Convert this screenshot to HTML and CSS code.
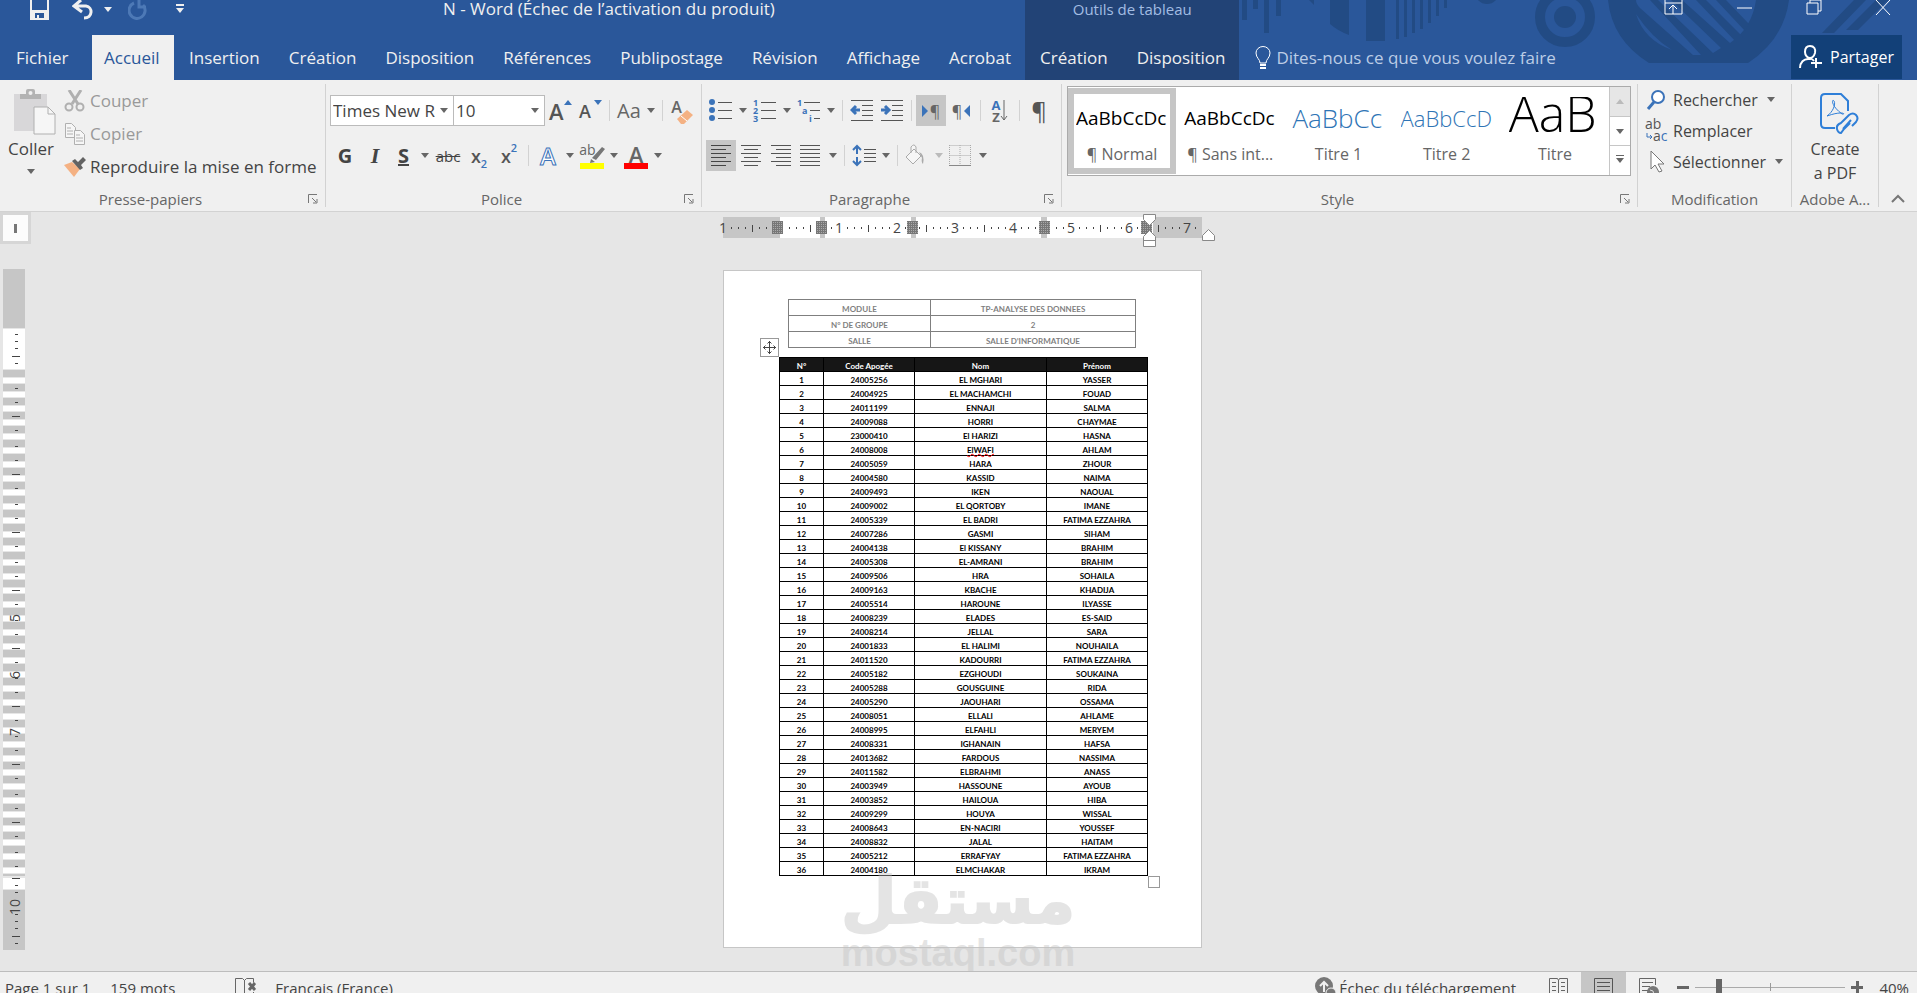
FILE: index.html
```
<!DOCTYPE html>
<html lang="fr">
<head>
    <meta charset="UTF-8">
    <meta name="viewport" content="width=device-width, initial-scale=1.0">
    <title>N - Word</title>
    <link rel="stylesheet" href="styles.css">
</head>
<body>

    <header class="app-header">
        <svg class="header-pattern" width="679" height="80" viewBox="0 0 679 80" aria-hidden="true">
            <g fill="#224b84">
                <path d="M4 0h5v20H4zM15 0h5v9h-5zM26 0h5v33h-5zM38 0h5v16h-5z"/>
                <path d="M92 0h19v35q-11-4-19-11zM128 0h19v41h-19zM158 0h3v39h-3zM166 0h3v37h-3zM174 0h3v33h-3zM182 0h3v29h-3zM190 0h3v23h-3zM198 0h3v16h-3zM206 0h3v8h-3z"/>
                <path d="M71 0h5v5z"/>
                <circle cx="249" cy="-8" r="12"/>
                <circle cx="327" cy="17" r="11"/>
                <path d="M370 0q4 40 41 63h99q36-24 41-63h-33q-4 28-26 43L444 0h-11l50 48-8 5L420 0h-8l51 55-8 0L402 8q-4-4-4-8z"/>
                <path d="M458 0h10l37 37-6 6zM478 0h10l23 24-4 7z"/>
                <path d="M584 33l32-33h12l-32 33zM608 30l30-30h12l-30 30z"/>
            </g>
            <path d="M398 14q8 26 36 36-20-12-36-36z" fill="#2a579a"/>
            <circle cx="327" cy="17" r="25" fill="none" stroke="#224b84" stroke-width="10"/>
        </svg>

        <div class="title-bar">
            <div class="quick-access">
                <button aria-label="Enregistrer">
                    <svg width="20" height="20" viewBox="0 0 20 20"><path d="M1 0v19h17V0" fill="none" stroke="#f0f0f0" stroke-width="2"/><path d="M2 10h15v9H2z" fill="#f0f0f0"/><path d="M5 13h9v5H9v-3H7v3H5z" fill="#2a579a"/></svg>
                </button>
                <button aria-label="Annuler">
                    <svg width="22" height="20" viewBox="0 0 22 20"><path d="M9 0L2 6l8 6M3 6h11c7 1 7 12-2 12" fill="none" stroke="#f0f0f0" stroke-width="3"/></svg>
                    <i class="caret"></i>
                </button>
                <button aria-label="Rétablir">
                    <svg width="20" height="20" viewBox="0 0 20 20"><path d="M6 3a8 8 0 1 0 9 2M11 0v7h7" fill="none" stroke="#4d79b6" stroke-width="3"/></svg>
                </button>
                <button class="customize" aria-label="Personnaliser">
                    <span class="bar"></span>
                    <i class="caret"></i>
                </button>
            </div>
            <div class="doc-title">N - Word (Échec de l’activation du produit)</div>
            <div class="window-buttons">
                <button aria-label="Options du ruban"><svg width="20" height="16" viewBox="0 0 20 16"><path d="M1 0v14h17V0M1 3h17M9 14V5M5 9l4-4 4 4" fill="none" stroke="#fff" stroke-width="1"/></svg></button>
                <button aria-label="Réduire"><svg width="16" height="16" viewBox="0 0 16 16"><path d="M0 8h15" stroke="#fff"/></svg></button>
                <button aria-label="Restaurer"><svg width="16" height="16" viewBox="0 0 16 16"><path d="M1 3h11v11H1zM4 3V0h11v11h-3" fill="none" stroke="#fff"/></svg></button>
                <button aria-label="Fermer"><svg width="16" height="16" viewBox="0 0 16 16"><path d="M1 0l14 15M15 0L1 15" stroke="#fff"/></svg></button>
            </div>
        </div>

        <nav class="tabs">
            <a class="file" href="#">Fichier</a>
            <a class="active" href="#">Accueil</a>
            <a href="#">Insertion</a>
            <a href="#">Création</a>
            <a href="#">Disposition</a>
            <a href="#">Références</a>
            <a href="#">Publipostage</a>
            <a href="#">Révision</a>
            <a href="#">Affichage</a>
            <a href="#">Acrobat</a>
            <div class="context-tabs">
                <span class="context-title">Outils de tableau</span>
                <a href="#">Création</a>
                <a href="#">Disposition</a>
            </div>
            <label class="tell-me">
                <svg width="16" height="24" viewBox="0 0 16 24"><path d="M5 17c0-4-4-5-4-10a7 6.500 0 0 1 14 0c0 5-4 6-4 10z" fill="none" stroke="#fff"/><path d="M5 19h6M5 22h6" stroke="#fff" stroke-width="2"/></svg>
                <input type="text" placeholder="Dites-nous ce que vous voulez faire">
            </label>
            <button class="share">
                <svg width="24" height="26" viewBox="0 0 24 26"><path d="M1 24c0-6 4-9 8-9s4-1 6 2M11 2c4 0 6 3 5 7-1 3-3 5-5 5s-5-2-5-6 2-6 5-6zM17 14v10M12 19h11" fill="none" stroke="#fff" stroke-width="2"/></svg>
                Partager
            </button>
        </nav>
    </header>

    <section class="ribbon">
        <div class="group clipboard">
            <div class="group-body">
                <button class="big">
                    <svg width="42" height="46" viewBox="0 0 42 46"><path d="M0 5h33v37H0z" fill="#d8d7d9"/><path d="M6 5h6V2q0-2 2-2h5q2 0 2 2v3h6v5H6z" fill="#b3b3b3"/><circle cx="16.500" cy="4" r="2" fill="#f0f0f0"/><path d="M20 18h14l7 7v20H20z" fill="#f6f6f6" stroke="#b0b0b0"/><path d="M34 18v7h7" fill="none" stroke="#b0b0b0"/></svg>
                    <span>Coller</span>
                    <i class="caret"></i>
                </button>
                <div class="stack">
                    <button class="line" disabled>
                        <svg width="22" height="22" viewBox="0 0 22 22"><path d="M5 0l9 14M17 0L8 14" stroke="#b0b0b0" stroke-width="3"/><circle cx="5" cy="17" r="3.500" fill="none" stroke="#b0b0b0" stroke-width="2"/><circle cx="16" cy="17" r="3.500" fill="none" stroke="#b0b0b0" stroke-width="2"/></svg>
                        Couper
                    </button>
                    <button class="line" disabled>
                        <svg width="22" height="22" viewBox="0 0 22 22"><g fill="#f6f6f6" stroke="#b0b0b0"><path d="M1.500 .5h6l4 4v10h-10z"/><path d="M3 5h4M3 8h6M3 11h6"/><path d="M10.500 7.500h6l4 4v10h-10z"/><path d="M12 12h4M12 15h7M12 18h7"/></g></svg>
                        Copier
                    </button>
                    <button class="line">
                        <svg width="22" height="20" viewBox="0 0 22 20"><path d="M0 8l8-3 8 7-6 8z" fill="#f4b183"/><path d="M8 4l3-2 3 3 5-5 3 3-5 5 2 3-3 2z" fill="#636363"/></svg>
                        Reproduire la mise en forme
                    </button>
                </div>
            </div>
            <div class="group-footer"><span>Presse-papiers</span><button class="launcher" aria-label="Presse-papiers"><svg width="10" height="10" viewBox="0 0 10 10"><path d="M.5 9V.5H9M4 4l4 4M9 5v4H5" fill="none" stroke="#777"/></svg></button></div>
        </div>

        <div class="group font">
            <div class="group-body rows">
                <div class="row">
                    <div class="combo name"><select aria-label="Police"><option>Times New Roman</option></select></div>
                    <div class="combo size"><select aria-label="Taille"><option>10</option></select></div>
                    <button class="tool grow">A<i class="up"></i></button>
                    <button class="tool shrink">A<i class="down"></i></button>
                    <i class="sep"></i>
                    <button class="tool split case">Aa<i class="caret"></i></button>
                    <i class="sep"></i>
                    <button class="tool clear" aria-label="Effacer la mise en forme"><span>A</span><svg width="16" height="14" viewBox="0 0 16 14"><path d="M0 9l10-9 6 5-9 9H4z" fill="#f4b183"/><path d="M4 6l6 5" stroke="#fff"/></svg></button>
                </div>
                <div class="row">
                    <button class="tool bold">G</button>
                    <button class="tool italic">I</button>
                    <button class="tool split under"><span>S</span><i class="caret"></i></button>
                    <button class="tool strike">abc</button>
                    <button class="tool script">x<sub>2</sub></button>
                    <button class="tool script">x<sup>2</sup></button>
                    <i class="sep"></i>
                    <button class="tool split effect"><span>A</span><i class="caret"></i></button>
                    <button class="tool split highlight" aria-label="Surlignage">
                        <span class="swatch"><em>ab</em><svg width="15" height="16" viewBox="0 0 15 16"><path d="M2 11L12 0l3 2L6 13zM0 16l1-4 4 3z" fill="#777"/></svg></span>
                        <i class="caret"></i>
                    </button>
                    <button class="tool split color"><span class="swatch">A</span><i class="caret"></i></button>
                </div>
            </div>
            <div class="group-footer"><span>Police</span><button class="launcher" aria-label="Police"><svg width="10" height="10" viewBox="0 0 10 10"><path d="M.5 9V.5H9M4 4l4 4M9 5v4H5" fill="none" stroke="#777"/></svg></button></div>
        </div>

        <div class="group paragraph">
            <div class="group-body rows">
                <div class="row">
                    <button class="tool split" aria-label="Puces"><svg width="24" height="24" viewBox="0 0 24 24"><g fill="#3b73b9"><circle cx="3" cy="3" r="3"/><circle cx="3" cy="11" r="3"/><circle cx="3" cy="19" r="3"/></g><path d="M9 3.500h14M9 11.500h14M9 19.500h14" stroke="#555"/></svg><i class="caret"></i></button>
                    <button class="tool split" aria-label="Numérotation"><svg class="digits" width="24" height="24" viewBox="0 0 24 24"><text x="0" y="7">1</text><text x="0" y="15">2</text><text x="0" y="23">3</text><path d="M8 3.500h15M8 11.500h15M8 19.500h15" stroke="#555"/></svg><i class="caret"></i></button>
                    <button class="tool split" aria-label="Liste à plusieurs niveaux"><svg class="digits" width="24" height="24" viewBox="0 0 24 24"><text x="0" y="7">1</text><text x="5" y="15">a</text><text x="12" y="23">i</text><path d="M7 3.500h16M13 11.500h10M17 19.500h6" stroke="#555"/></svg><i class="caret"></i></button>
                    <i class="sep"></i>
                    <button class="tool" aria-label="Diminuer le retrait"><svg width="24" height="24" viewBox="0 0 24 24"><path d="M1 1.500h22M12 6.500h11M12 11.500h11M12 16.500h11M1 21.500h22" stroke="#555"/><path d="M10 11H2M6 7l-4 4 4 4" fill="none" stroke="#3b73b9" stroke-width="3"/></svg></button>
                    <button class="tool" aria-label="Augmenter le retrait"><svg width="24" height="24" viewBox="0 0 24 24"><path d="M1 1.500h22M12 6.500h11M12 11.500h11M12 16.500h11M1 21.500h22" stroke="#555"/><path d="M1 11h8M5 7l4 4-4 4" fill="none" stroke="#3b73b9" stroke-width="3"/></svg></button>
                    <i class="sep"></i>
                    <button class="tool pressed pilcrow"><i class="tri-right"></i>¶</button>
                    <button class="tool pilcrow">¶<i class="tri-left"></i></button>
                    <i class="sep"></i>
                    <button class="tool sort"><span><b>A</b><b>Z</b></span><svg width="8" height="22" viewBox="0 0 8 22"><path d="M4 0v20M1 16l3 4 3-4" fill="none" stroke="#666"/></svg></button>
                    <i class="sep"></i>
                    <button class="tool marks">¶</button>
                </div>
                <div class="row">
                    <button class="tool pressed" aria-label="Aligner à gauche"><svg width="22" height="24" viewBox="0 0 22 24"><path d="M1 1.500h20M1 5.500h15M1 9.500h20M1 13.500h15M1 17.500h20M1 21.500h15" stroke="#444"/></svg></button>
                    <button class="tool" aria-label="Centrer"><svg width="22" height="24" viewBox="0 0 22 24"><path d="M1 1.500h20M4 5.500h14M1 9.500h20M4 13.500h14M1 17.500h20M4 21.500h14" stroke="#555"/></svg></button>
                    <button class="tool" aria-label="Aligner à droite"><svg width="22" height="24" viewBox="0 0 22 24"><path d="M1 1.500h20M6 5.500h15M1 9.500h20M6 13.500h15M1 17.500h20M6 21.500h15" stroke="#555"/></svg></button>
                    <button class="tool split" aria-label="Justifier"><svg width="22" height="24" viewBox="0 0 22 24"><path d="M1 1.500h20M1 5.500h20M1 9.500h20M1 13.500h20M1 17.500h20M1 21.500h20" stroke="#555"/></svg><i class="caret"></i></button>
                    <i class="sep"></i>
                    <button class="tool split" aria-label="Interligne"><svg width="24" height="24" viewBox="0 0 24 24"><path d="M5 2v8M1 6l4-4 4 4M5 13v8M1 17l4 4 4-4" fill="none" stroke="#3b73b9" stroke-width="2"/><path d="M12 5.500h12M12 9.500h12M12 13.500h12M12 17.500h12" stroke="#555"/></svg><i class="caret"></i></button>
                    <i class="sep"></i>
                    <button class="tool split" disabled aria-label="Trame de fond"><svg width="22" height="24" viewBox="0 0 22 24"><path d="M1 13l8-8 7 7-8 8zM6 9V3q3-4 5 0v6" fill="#f6f6f6" stroke="#aaa"/><path d="M14 8q6 2 4 12-2-2-1-6z" fill="#aaa"/></svg><i class="caret"></i></button>
                    <button class="tool split" aria-label="Bordures"><svg width="22" height="24" viewBox="0 0 22 24"><path d="M.5 1.500h21M.5 11.500h21M.5 1v20M11 1v20M21.500 1v20" stroke="#aaa" stroke-dasharray="1 1"/><path d="M0 21.500h22" stroke="#888"/></svg><i class="caret"></i></button>
                </div>
            </div>
            <div class="group-footer"><span>Paragraphe</span><button class="launcher" aria-label="Paragraphe"><svg width="10" height="10" viewBox="0 0 10 10"><path d="M.5 9V.5H9M4 4l4 4M9 5v4H5" fill="none" stroke="#777"/></svg></button></div>
        </div>

        <div class="group styles">
            <div class="group-body">
                <div class="gallery">
                    <button class="style selected"><span class="sample">AaBbCcDc</span><span>¶ Normal</span></button>
                    <button class="style"><span class="sample">AaBbCcDc</span><span>¶ Sans int...</span></button>
                    <button class="style"><span class="sample title1">AaBbCc</span><span>Titre 1</span></button>
                    <button class="style"><span class="sample title2">AaBbCcD</span><span>Titre 2</span></button>
                    <button class="style"><span class="sample title">AaB</span><span>Titre</span></button>
                    <div class="gallery-scroll">
                        <button disabled aria-label="Haut"><i class="up"></i></button>
                        <button aria-label="Bas"><i class="caret"></i></button>
                        <button aria-label="Autres"><i class="caret over"></i></button>
                    </div>
                </div>
            </div>
            <div class="group-footer"><span>Style</span><button class="launcher" aria-label="Style"><svg width="10" height="10" viewBox="0 0 10 10"><path d="M.5 9V.5H9M4 4l4 4M9 5v4H5" fill="none" stroke="#777"/></svg></button></div>
        </div>

        <div class="group editing">
            <div class="group-body stack">
                <button class="line">
                    <svg width="22" height="22" viewBox="0 0 22 22"><circle cx="12" cy="8" r="6" fill="#fff" stroke="#3b73b9" stroke-width="2"/><path d="M8 13l-6 7" stroke="#3b73b9" stroke-width="3"/></svg>
                    Rechercher <i class="caret"></i>
                </button>
                <button class="line">
                    <svg class="replace" width="22" height="22" viewBox="0 0 22 22"><text x="-1" y="9">ab</text><text x="7" y="21">a<tspan fill="#3b73b9">c</tspan></text><path d="M1 13v4h5M4 15l2 2-2 2" fill="none" stroke="#3b73b9"/></svg>
                    Remplacer
                </button>
                <button class="line">
                    <svg width="22" height="22" viewBox="0 0 22 22"><path d="M5 0v18l4-4 4 7 3-1-4-7h6z" fill="#fff" stroke="#777"/></svg>
                    Sélectionner<i class="caret"></i>
                </button>
            </div>
            <div class="group-footer"><span>Modification</span></div>
        </div>

        <div class="group adobe">
            <div class="group-body">
                <button class="big">
                    <svg width="40" height="43" viewBox="0 0 40 43"><g fill="none" stroke="#2f7fd8" stroke-width="2"><path d="M16 36H6q-4 0-4-4V6q0-4 4-4h16l7 7v10"/><path d="M8 24c6-4 9-12 7-15s-4 4 8 13c4 1 2-4-15 2z" stroke-width="1"/><path d="M24 29l6-6q4-3 7 0t0 7l-4 4M31 31l-6 6-3 4q-3 0-4-4t4-6l3-3M24 37l8-9"/></g></svg>
                    <span>Create<br>a PDF</span>
                </button>
            </div>
            <div class="group-footer"><span>Adobe A...</span></div>
        </div>

        <button class="collapse" aria-label="Réduire le ruban"><svg width="14" height="10" viewBox="0 0 14 10"><path d="M1 8l6-6 6 6" fill="none" stroke="#777" stroke-width="2"/></svg></button>
    </section>

    <main class="workspace">
        <div class="side">
            <div class="tab-stop"><i></i></div>
            <svg class="v-ruler" width="22" height="684" viewBox="0 0 22 684">
                <defs>
                    <pattern id="rows" width="22" height="14" patternUnits="userSpaceOnUse" y="101">
                        <rect width="22" height="7" fill="#c6c6c6"/>
                        <rect y="8" width="22" height="5" fill="#fff"/>
                    </pattern>
                    <pattern id="ticks" width="22" height="58" patternUnits="userSpaceOnUse" y="110">
                        <path d="M12 9.500h3M12 23.500h3M9 37.500h8M12 51.500h3" stroke="#444"/>
                    </pattern>
                </defs>
                <rect width="22" height="59" fill="#c6c6c6"/>
                <rect y="60" width="22" height="40" fill="#fff"/>
                <path d="M12 65.500h3M12 72.500h3M12 79.500h3M9 87.500h8M12 94.500h3" stroke="#444"/>
                <rect y="101" width="22" height="506" fill="url(#rows)"/>
                <rect y="110" width="22" height="497" fill="url(#ticks)"/>
                <rect y="609" width="22" height="11" fill="#fff"/>
                <rect y="621" width="22" height="60" fill="#c6c6c6"/>
                <path d="M9 609.500h8M12 616.500h3M12 623.500h3M12 645.500h3M12 652.500h3M12 659.500h3M9 667.500h8M12 674.500h3" stroke="#444"/>
                <g class="ruler-text">
                    <text transform="translate(17 349) rotate(-90)">5</text>
                    <text transform="translate(17 406) rotate(-90)">6</text>
                    <text transform="translate(17 463) rotate(-90)">7</text>
                    <text transform="translate(17 638) rotate(-90)">10</text>
                </g>
            </svg>
        </div>

        <div class="canvas">
            <svg class="h-ruler" width="479" height="36" viewBox="0 0 479 36">
                <defs>
                    <pattern id="inch" x="58" width="58" height="36" patternUnits="userSpaceOnUse">
                        <path d="M8.500 13v2M15.500 13v2M22.500 13v2M29.500 11v7M36.500 13v2M43.500 13v2M50.500 13v2" stroke="#444"/>
                    </pattern>
                    <pattern id="grid" width="2" height="2" patternUnits="userSpaceOnUse">
                        <rect width="2" height="2" fill="#777"/>
                        <rect width="1" height="1" fill="#aaa"/>
                    </pattern>
                </defs>
                <path d="M0 3h479v21H0z" fill="#fff"/>
                <path d="M0 3h57v21H0zM97 3h5v21h-5zM188 3h5v21h-5zM318 3h6v21h-6zM430 3h49v21h-49z" fill="#c6c6c6"/>
                <rect width="479" height="36" fill="url(#inch)"/>
                <path d="M49 7h11v13H49zM93 7h11v13H93zM184 7h11v13h-11zM316 7h11v13h-11zM418 7h11v13h-11z" fill="url(#grid)"/>
                <g class="ruler-text">
                    <text x="0" y="19">1</text><text x="116" y="19">1</text><text x="174" y="19">2</text><text x="232" y="19">3</text>
                    <text x="290" y="19">4</text><text x="348" y="19">5</text><text x="406" y="19">6</text><text x="464" y="19">7</text>
                </g>
                <g fill="#fff" stroke="#888">
                    <path d="M420.500 .5h12v5l-6 6-6-6z"/>
                    <path d="M426.500 16.500l6 6v10h-12v-10zM420.500 26.500h12"/>
                    <path d="M485.500 15.500l6 6v5h-12v-5z"/>
                </g>
            </svg>

            <article class="page">
                <table class="info">
                    <tr><td>MODULE</td><td>TP-ANALYSE DES DONNEES</td></tr>
                    <tr><td>N° DE GROUPE</td><td>2</td></tr>
                    <tr><td>SALLE</td><td>SALLE D’INFORMATIQUE</td></tr>
                </table>

                <div class="list-wrap">
                    <div class="move-handle"><svg width="13" height="13" viewBox="0 0 13 13"><path d="M6.500 0v13M0 6.500h13M4.500 2.500l2-2 2 2M4.500 10.500l2 2 2-2M2.500 4.500l-2 2 2 2M10.500 4.500l2 2-2 2" fill="none" stroke="#444"/></svg></div>
                    <table class="list">
                        <thead>
                            <tr><th>N°</th><th>Code Apogée</th><th>Nom</th><th>Prénom</th></tr>
                        </thead>
                        <tbody>
                            <tr><td>1</td><td>24005256</td><td>EL MGHARI</td><td>YASSER</td></tr>
                            <tr><td>2</td><td>24004925</td><td>EL MACHAMCHI</td><td>FOUAD</td></tr>
                            <tr><td>3</td><td>24011199</td><td>ENNAJI</td><td>SALMA</td></tr>
                            <tr><td>4</td><td>24009088</td><td>HORRI</td><td>CHAYMAE</td></tr>
                            <tr><td>5</td><td>23000410</td><td>El HARIZI</td><td>HASNA</td></tr>
                            <tr><td>6</td><td>24008008</td><td><span class="typo">ElWAFI</span></td><td>AHLAM</td></tr>
                            <tr><td>7</td><td>24005059</td><td>HARA</td><td>ZHOUR</td></tr>
                            <tr><td>8</td><td>24004580</td><td>KASSID</td><td>NAIMA</td></tr>
                            <tr><td>9</td><td>24009493</td><td>IKEN</td><td>NAOUAL</td></tr>
                            <tr><td>10</td><td>24009002</td><td>EL QORTOBY</td><td>IMANE</td></tr>
                            <tr><td>11</td><td>24005339</td><td>EL BADRI</td><td>FATIMA EZZAHRA</td></tr>
                            <tr><td>12</td><td>24007286</td><td>GASMI</td><td>SIHAM</td></tr>
                            <tr><td>13</td><td>24004138</td><td>El KISSANY</td><td>BRAHIM</td></tr>
                            <tr><td>14</td><td>24005308</td><td>EL-AMRANI</td><td>BRAHIM</td></tr>
                            <tr><td>15</td><td>24009506</td><td>HRA</td><td>SOHAILA</td></tr>
                            <tr><td>16</td><td>24009163</td><td>KBACHE</td><td>KHADIJA</td></tr>
                            <tr><td>17</td><td>24005514</td><td>HAROUNE</td><td>ILYASSE</td></tr>
                            <tr><td>18</td><td>24008239</td><td>ELADES</td><td>ES-SAID</td></tr>
                            <tr><td>19</td><td>24008214</td><td>JELLAL</td><td>SARA</td></tr>
                            <tr><td>20</td><td>24001833</td><td>EL HALIMI</td><td>NOUHAILA</td></tr>
                            <tr><td>21</td><td>24011520</td><td>KADOURRI</td><td>FATIMA EZZAHRA</td></tr>
                            <tr><td>22</td><td>24005182</td><td>EZGHOUDI</td><td>SOUKAINA</td></tr>
                            <tr><td>23</td><td>24005288</td><td>GOUSGUINE</td><td>RIDA</td></tr>
                            <tr><td>24</td><td>24005290</td><td>JAOUHARI</td><td>OSSAMA</td></tr>
                            <tr><td>25</td><td>24008051</td><td>ELLALI</td><td>AHLAME</td></tr>
                            <tr><td>26</td><td>24008995</td><td>ELFAHLI</td><td>MERYEM</td></tr>
                            <tr><td>27</td><td>24008331</td><td>IGHANAIN</td><td>HAFSA</td></tr>
                            <tr><td>28</td><td>24013682</td><td>FARDOUS</td><td>NASSIMA</td></tr>
                            <tr><td>29</td><td>24011582</td><td>ELBRAHMI</td><td>ANASS</td></tr>
                            <tr><td>30</td><td>24003949</td><td>HASSOUNE</td><td>AYOUB</td></tr>
                            <tr><td>31</td><td>24003852</td><td>HAILOUA</td><td>HIBA</td></tr>
                            <tr><td>32</td><td>24009299</td><td>HOUYA</td><td>WISSAL</td></tr>
                            <tr><td>33</td><td>24008643</td><td>EN-NACIRI</td><td>YOUSSEF</td></tr>
                            <tr><td>34</td><td>24008832</td><td>JALAL</td><td>HAITAM</td></tr>
                            <tr><td>35</td><td>24005212</td><td>ERRAFYAY</td><td>FATIMA EZZAHRA</td></tr>
                            <tr><td>36</td><td>24004180</td><td>ELMCHAKAR</td><td>IKRAM</td></tr>
                        </tbody>
                    </table>
                    <div class="resize-handle"></div>
                </div>
            </article>

            <div class="watermark">
                <span class="arabic" lang="ar" dir="rtl">مستقل</span>
                <span class="latin">mostaql.com</span>
            </div>
        </div>
    </main>

    <footer class="status-bar">
        <span class="pages">Page 1 sur 1</span>
        <span class="words">159 mots</span>
        <svg class="proof" width="22" height="22" viewBox="0 0 22 22"><path d="M.5 16V.5h7l2 2 2-2h7v4M9.500 2v16M18.500 14v4" fill="none" stroke="#666"/><path d="M14 5l6 7M20 5l-6 7" stroke="#666" stroke-width="3"/></svg>
        <span>Français (France)</span>
        <div class="status-right">
            <span class="upload"><svg width="22" height="22" viewBox="0 0 22 22"><circle cx="9" cy="9" r="9" fill="#777"/><path d="M9 15V5M5 9l4-4 4 4" fill="none" stroke="#f0f0f0" stroke-width="2"/><circle cx="16" cy="16" r="5" fill="#777" stroke="#f0f0f0"/></svg>Échec du téléchargement</span>
            <button class="view" aria-label="Mode Lecture"><svg width="20" height="22" viewBox="0 0 20 22"><path d="M.5 20V1.500h8l1 2 1-2h8V20M9.500 3v17M3 5.500h4M3 9.500h4M3 13.500h4M12 5.500h4M12 9.500h4M12 13.500h4" fill="none" stroke="#666"/></svg></button>
            <button class="view on" aria-label="Page"><svg width="20" height="22" viewBox="0 0 20 22"><path d="M.5 22V1.500h18V22M3 5.500h13M3 9.500h13M3 13.500h13M3 17.500h13" fill="none" stroke="#555"/></svg></button>
            <button class="view" aria-label="Mode Web"><svg width="20" height="22" viewBox="0 0 20 22"><path d="M.5 22V1.500h16V8M3 5.500h11M3 9.500h8M3 13.500h6" fill="none" stroke="#666"/><circle cx="14" cy="15" r="6" fill="#777"/><path d="M11 13l3 1 1 4" stroke="#ddd" fill="none"/></svg></button>
            <button class="zoom-btn" aria-label="Zoom arrière"><i class="minus"></i></button>
            <input class="zoom" type="range" min="10" max="500" value="80" aria-label="Zoom">
            <button class="zoom-btn" aria-label="Zoom avant"><i class="minus plus"></i></button>
            <span class="percent">40%</span>
        </div>
    </footer>

</body>
</html>
```
FILE: styles.css
```
* {
    box-sizing: border-box;
}

body {
    margin: 0;
    height: 100vh;
    overflow: hidden;
    display: flex;
    flex-direction: column;
    background: #e6e6e6;
    color: #444;
    font-family: "Open Sans", "Noto Sans", sans-serif;
    font-size: 16px;
}

button {
    display: flex;
    align-items: center;
    justify-content: center;
    padding: 0;
    border: 0;
    background: none;
    color: inherit;
    font: inherit;
}

svg {
    display: block;
    flex: none;
}

a {
    color: inherit;
    text-decoration: none;
}

.caret, .down {
    flex: none;
    width: 0;
    height: 0;
    border: 4px solid transparent;
    border-top: 5px solid #666;
    border-bottom: 0;
}

.up {
    flex: none;
    width: 0;
    height: 0;
    border: 4px solid transparent;
    border-bottom: 5px solid #bbb;
    border-top: 0;
}

/* ---------- header ---------- */

.app-header {
    position: relative;
    flex: none;
    background: #2a579a;
    color: #f0f0f0;
    font-size: 17px;
}

.header-pattern {
    position: absolute;
    top: 0;
    right: 0;
}

.title-bar {
    position: relative;
    display: flex;
    justify-content: space-between;
    height: 35px;
}

.quick-access {
    display: flex;
    align-items: flex-start;
    gap: 16px;
    width: 443px;
    padding-left: 30px;
}

.quick-access button {
    height: 19px;
    gap: 10px;
}

.quick-access button:nth-child(2) {
    margin-left: 6px;
}

.quick-access .caret {
    border-top-color: #f0f0f0;
}

.quick-access .customize {
    flex-direction: column;
    gap: 2px;
    height: 16px;
    margin-left: 12px;
}

.bar {
    width: 8px;
    height: 2px;
    background: #f0f0f0;
}

.doc-title {
    flex: 1;
    line-height: 18px;
}

.window-buttons {
    display: flex;
    align-items: flex-start;
    gap: 53px;
    padding-right: 26px;
}

.tabs {
    position: relative;
    display: flex;
    height: 45px;
    line-height: 46px;
}

.tabs a {
    padding: 0 14px 0 15px;
}

.tabs .file {
    width: 92px;
    padding-left: 16px;
}

.tabs .active {
    width: 82px;
    padding: 0 12px;
    background: #f0f0f0;
    color: #2a579a;
}

.context-tabs {
    position: relative;
    display: flex;
    background: #224376;
}

.context-title {
    position: absolute;
    left: 0;
    right: 0;
    bottom: 45px;
    height: 35px;
    background: #224376;
    color: #a3bde3;
    font-size: 15px;
    line-height: 18px;
    text-align: center;
}

.tell-me {
    display: flex;
    align-items: center;
    flex: 1;
    gap: 5px;
    padding-left: 16px;
}

.tell-me input {
    flex: 1;
    border: 0;
    padding: 0;
    background: none;
    font: inherit;
    color: #fff;
}

.tell-me input::placeholder {
    color: #bccde6;
    opacity: 1;
}

.share {
    gap: 7px;
    width: 111px;
    height: 44px;
    margin-right: 15px;
    background: #124078;
    color: #fff;
    font-size: 16px;
}

/* ---------- ribbon ---------- */

.ribbon {
    display: flex;
    flex: none;
    height: 132px;
    padding-top: 4px;
    background: #f0f0f0;
    border-bottom: 1px solid #d2d2d2;
}

.group {
    display: flex;
    flex-direction: column;
    flex: none;
    height: 123px;
    border-right: 1px solid #d2d2d2;
}

.group-body {
    display: flex;
    flex: 1;
}

.group-footer {
    display: flex;
    align-items: center;
    height: 16px;
    color: #666;
    font-size: 15px;
    line-height: 16px;
}

.group-footer span {
    flex: 1;
    text-align: center;
    white-space: nowrap;
}

.launcher {
    width: 24px;
}

.clipboard {
    width: 326px;
    font-size: 17px;
}

.font { width: 376px; }
.paragraph { width: 360px; }
.styles { flex: 1; }
.editing { width: 154px; }
.adobe { width: 87px; }

.big {
    flex-direction: column;
    justify-content: flex-start;
    width: 62px;
    padding-top: 5px;
    line-height: 24px;
}

.big svg {
    margin: 0 0 2px 8px;
}

.big .caret {
    margin-top: 8px;
}

.adobe .big {
    width: 100%;
    padding-top: 8px;
}

.stack {
    display: flex;
    flex-direction: column;
}

.clipboard .stack {
    padding-left: 2px;
}

.line {
    justify-content: flex-start;
    gap: 4px;
    height: 33px;
    white-space: nowrap;
}

.line:disabled {
    color: #999;
}

.editing .line {
    gap: 5px;
    height: 31px;
}

.editing .group-body {
    padding-left: 8px;
}

.editing .line .caret {
    margin-left: 4px;
}

.replace {
    overflow: visible;
}

.replace text {
    font-size: 14px;
    fill: #555;
}

.rows {
    flex-direction: column;
    gap: 14px;
    padding: 11px 0 0 4px;
}

.row {
    display: flex;
    height: 31px;
}

.combo {
    position: relative;
    border: 1px solid #bbb;
    background: #fff;
}

.combo::after {
    content: '';
    position: absolute;
    top: 12px;
    right: 5px;
    border: 4px solid transparent;
    border-top: 5px solid #666;
    border-bottom: 0;
}

.combo.name {
    width: 124px;
}

.combo.size {
    width: 91px;
    border-left: 0;
}

.combo select {
    width: 100%;
    height: 29px;
    border: 0;
    padding: 0 18px 0 2px;
    appearance: none;
    background: none;
    color: #444;
    font: inherit;
    font-size: 17px;
}

.tool {
    position: relative;
    flex: none;
    width: 30px;
    color: #444;
}

.tool.split {
    width: 44px;
    justify-content: space-between;
    padding: 0 3px;
}

.tool:disabled .caret {
    border-top-color: #bbb;
}

.pressed {
    background: #c6c6c6;
}

.sep {
    width: 1px;
    height: 21px;
    margin: 5px 4px;
    background: #d2d2d2;
}

.tool.grow, .tool.shrink {
    justify-content: flex-start;
    padding-left: 4px;
    color: #555;
    font-size: 22px;
    font-weight: 600;
}

.tool.shrink {
    font-size: 18px;
}

.grow .up, .shrink .down {
    position: absolute;
    top: 5px;
    right: 3px;
    border-bottom-color: #3b73b9;
}

.shrink .down {
    border-top-color: #3b73b9;
    border-bottom-color: transparent;
}

.case {
    color: #666;
    font-size: 20px;
}

.clear span {
    margin: 0 -5px 8px 0;
    color: #666;
    font-weight: 600;
}

.clear svg {
    margin-top: 12px;
}

.bold {
    font-size: 20px;
    font-weight: 700;
}

.italic {
    font: italic bold 22px "Liberation Serif", serif;
}

.tool.under {
    width: 42px;
}

.under span {
    padding-left: 5px;
    font-size: 20px;
    font-weight: 700;
    text-decoration: underline;
}

.tool.strike {
    width: 32px;
    text-decoration: line-through;
    font-size: 15px;
}

.script {
    color: #555;
    font-size: 18px;
    font-weight: 600;
}

.script sub, .script sup {
    align-self: flex-end;
    color: #3b73b9;
    font-size: 11px;
}

.script sup {
    align-self: flex-start;
}

.effect span {
    padding-left: 4px;
    color: #fff;
    font-size: 24px;
    font-weight: 600;
    -webkit-text-stroke: 1px #3b73b9;
}

.swatch {
    display: flex;
    justify-content: center;
    width: 24px;
    height: 26px;
    border-bottom: 6px solid red;
    color: #666;
    font-size: 22px;
    font-weight: 600;
    line-height: 22px;
}

.highlight .swatch {
    border-bottom-color: #ff0;
    font-size: 14px;
    font-weight: 400;
    line-height: 14px;
}

.highlight em {
    margin-right: -6px;
    font-style: normal;
}

.highlight svg {
    margin-top: 4px;
}

.digits {
    overflow: visible;
}

.digits text {
    fill: #3b73b9;
    font-size: 9px;
    font-weight: 700;
}

.pilcrow {
    color: #666;
    gap: 2px;
}

.tri-right, .tri-left {
    border: 6px solid transparent;
    border-left-color: #3b73b9;
    border-right: 0;
}

.tri-left {
    border-right: 6px solid #3b73b9;
    border-left: 0;
}

.sort span {
    display: flex;
    flex-direction: column;
    color: #3b73b9;
    font-size: 13px;
    line-height: 12px;
}

.sort b + b {
    color: #666;
}

.marks {
    font-size: 24px;
    color: #555;
}

.gallery {
    display: flex;
    flex: 1;
    height: 90px;
    margin: 2px 6px 0 5px;
    border: 1px solid #ababab;
    background: #fff;
}

.style {
    flex: 1;
    flex-direction: column;
    justify-content: flex-start;
    min-width: 0;
    height: 86px;
    margin-top: 1px;
    border: 6px solid transparent;
    padding: 3px 2px 0;
    color: #666;
    white-space: nowrap;
}

.style.selected {
    border-color: #c6c6c6;
}

.sample {
    width: 100%;
    height: 46px;
    overflow: hidden;
    color: #000;
    font-size: 19px;
    line-height: 42px;
    text-align: left;
}

.title1, .title2 {
    color: #2e74b5;
    font-size: 26px;
    font-weight: 300;
}

.title2 {
    font-size: 22px;
}

.title {
    font-size: 50px;
    font-weight: 300;
    line-height: 32px;
}

.gallery-scroll {
    display: flex;
    flex-direction: column;
    width: 21px;
    border-left: 1px solid #c6c6c6;
}

.gallery-scroll button {
    flex: 1;
    border-bottom: 1px solid #c6c6c6;
}

.gallery-scroll button:last-child {
    border-bottom: 0;
}

.gallery-scroll button:disabled {
    background: #e6e6e6;
}

.over {
    position: relative;
}

.over::before {
    content: '';
    position: absolute;
    top: -8px;
    left: -4px;
    width: 8px;
    height: 1px;
    background: #666;
}

.collapse {
    align-self: flex-end;
    width: 38px;
    height: 24px;
}

/* ---------- workspace ---------- */

.workspace {
    display: flex;
    flex: 1;
    min-height: 0;
    overflow: hidden;
}

.side {
    width: 31px;
}

.tab-stop {
    display: flex;
    align-items: center;
    justify-content: center;
    width: 31px;
    height: 32px;
    border: 3px solid #d6d6d6;
    background: #fcfcfc;
}

.tab-stop i {
    width: 3px;
    height: 9px;
    background: #777;
}

.v-ruler {
    margin: 25px 0 0 3px;
}

.ruler-text text {
    fill: #444;
    font-size: 14px;
    text-anchor: middle;
}

.canvas {
    position: relative;
    display: flex;
    flex-direction: column;
    align-items: center;
    flex: 1;
    padding: 2px 24px 0 0;
}

.h-ruler {
    overflow: visible;
}

.page {
    flex: none;
    width: 479px;
    height: 678px;
    margin-top: 20px;
    padding: 28px 0 0 55px;
    border: 1px solid #c6c6c6;
    background: #fff;
    font-family: Lato, "Open Sans", sans-serif;
    font-size: 8px;
    font-weight: 700;
    line-height: 8px;
}

table {
    border-collapse: collapse;
    table-layout: fixed;
}

td, th {
    border: 1px solid #000;
    padding: 2px 0 0 1px;
    text-align: center;
    white-space: nowrap;
}

.info {
    width: 348px;
    margin-left: 9px;
    color: #7f7f7f;
}

.info td {
    height: 16px;
    border-color: #7f7f7f;
}

.info td:first-child {
    width: 142px;
}

.list-wrap {
    position: relative;
    width: 369px;
    margin-top: 9px;
    color: #000;
}

.list {
    width: 369px;
}

.list td, .list th {
    height: 14px;
}

.list th {
    background: #161616;
    color: #fff;
}

.list th:nth-child(1) { width: 44px; }
.list th:nth-child(2) { width: 91px; }
.list th:nth-child(3) { width: 132px; }

.typo {
    text-decoration: underline wavy red 1px;
    text-decoration-skip-ink: none;
    text-underline-offset: 0;
}

.move-handle {
    position: absolute;
    top: -19px;
    left: -19px;
    display: flex;
    align-items: center;
    justify-content: center;
    width: 19px;
    height: 19px;
    border: 1px solid #999;
    background: #fff;
}

.resize-handle {
    position: absolute;
    top: 100%;
    left: 100%;
    width: 12px;
    height: 12px;
    border: 1px solid #999;
    background: #fff;
}

.watermark {
    position: absolute;
    bottom: -2px;
    left: 0;
    right: 32px;
    display: flex;
    flex-direction: column;
    align-items: center;
    color: #c1c1c1;
    font-weight: 700;
    opacity: 0.42;
}

.arabic {
    font-family: "DejaVu Sans", sans-serif;
    font-size: 64px;
    line-height: 64px;
    -webkit-text-stroke: 2px #c1c1c1;
}

.latin {
    font-family: "Liberation Sans", sans-serif;
    font-size: 38px;
    line-height: 40px;
}

/* ---------- status bar ---------- */

.status-bar {
    display: flex;
    flex: none;
    height: 22px;
    overflow: hidden;
    border-top: 1px solid #bdbdbd;
    background: #f0f0f0;
    font-size: 15px;
    line-height: 32px;
    padding: 0 8px 0 5px;
    white-space: nowrap;
}

.words {
    margin-left: 20px;
}

.proof {
    margin: 6px 18px 0 60px;
}

.status-right {
    display: flex;
    margin-left: auto;
}

.upload {
    display: flex;
    gap: 2px;
    margin-right: 20px;
}

.upload svg {
    margin-top: 5px;
}

.view {
    align-items: flex-start;
    width: 45px;
    height: 34px;
    padding-top: 5px;
}

.view.on {
    background: #c6c6c6;
}

.zoom-btn {
    width: 16px;
    height: 30px;
}

.zoom-btn:nth-of-type(4) {
    margin-left: 4px;
}

.minus {
    position: relative;
    width: 12px;
    height: 3px;
    background: #666;
}

.plus::before {
    content: '';
    position: absolute;
    top: -5px;
    left: 5px;
    width: 3px;
    height: 13px;
    background: #666;
}

.zoom {
    width: 150px;
    height: 30px;
    margin: 0 4px;
    appearance: none;
    background: linear-gradient(#999, #999) 75px 11px / 1px 8px no-repeat, linear-gradient(#aaa, #aaa) 0 15px / 100% 1px no-repeat;
}

.zoom::-webkit-slider-thumb {
    appearance: none;
    width: 6px;
    height: 16px;
    background: #666;
}

.percent {
    width: 44px;
    text-align: right;
}
```
